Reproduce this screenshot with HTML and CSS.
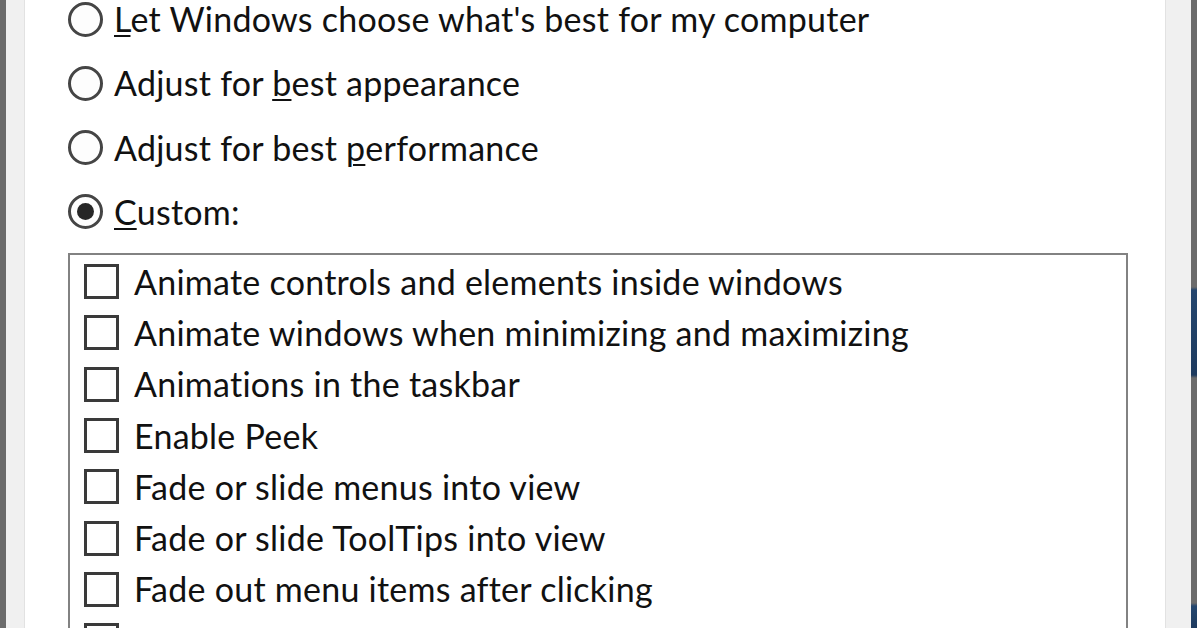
FILE: index.html
```html
<!DOCTYPE html>
<html lang="en">
<head>
<meta charset="utf-8">
<title>Performance Options</title>
<link rel="stylesheet" href="styles.css">
</head>
<body>
<div class="frame">
  <div class="edge edge-left"></div>
  <div class="side side-left"></div>
  <main class="content">
    <div class="radios">
      <label class="radio-row"><span class="radio"></span><span class="label"><u>L</u>et Windows choose what's best for my computer</span></label>
      <label class="radio-row"><span class="radio"></span><span class="label">Adjust for <u>b</u>est appearance</span></label>
      <label class="radio-row"><span class="radio"></span><span class="label">Adjust for best <u>p</u>erformance</span></label>
      <label class="radio-row"><span class="radio radio-on"></span><span class="label"><u>C</u>ustom:</span></label>
    </div>
    <div class="listbox">
      <div class="check-row"><span class="box"></span><span class="label">Animate controls and elements inside windows</span></div>
      <div class="check-row"><span class="box"></span><span class="label">Animate windows when minimizing and maximizing</span></div>
      <div class="check-row"><span class="box"></span><span class="label">Animations in the taskbar</span></div>
      <div class="check-row"><span class="box"></span><span class="label">Enable Peek</span></div>
      <div class="check-row"><span class="box"></span><span class="label">Fade or slide menus into view</span></div>
      <div class="check-row"><span class="box"></span><span class="label">Fade or slide ToolTips into view</span></div>
      <div class="check-row"><span class="box"></span><span class="label">Fade out menu items after clicking</span></div>
      <div class="check-row"><span class="box"></span><span class="label">Save taskbar thumbnail previews</span></div>
      <div class="check-row"><span class="box"></span><span class="label">Show shadows under mouse pointer</span></div>
    </div>
  </main>
  <div class="side side-right"></div>
  <div class="edge edge-right"></div>
</div>
</body>
</html>
```
FILE: styles.css
```css
html, body {
  margin: 0;
  padding: 0;
  background: #ffffff;
}
body {
  width: 1197px;
  height: 628px;
  overflow: hidden;
  font-family: Lato, "Open Sans", "Liberation Sans", sans-serif;
  font-size: 34px;
  letter-spacing: 0.25px;
  color: #111111;
}
.frame {
  display: flex;
  height: 628px;
}
.edge {
  width: 6px;
  flex: none;
  background: #6b6b6b;
}
.edge-right {
  background: linear-gradient(to bottom,
    #6b6b6b 0, #6b6b6b 287px,
    #24466e 290px, #1d3a5e 375px,
    #6b6b6b 378px, #6b6b6b 603px,
    #24466e 606px, #1d3a5e 628px);
}
.side {
  flex: none;
  background: #f0f0f0;
}
.side-left {
  width: 18px;
  border-right: 1px solid #e2e2e2;
}
.side-right {
  width: 25px;
  border-left: 1px solid #e2e2e2;
}
.content {
  flex: 1;
  min-width: 0;
  background: #ffffff;
  display: flex;
  flex-direction: column;
  overflow: hidden;
}
.radios {
  padding-left: 43px;
  display: flex;
  flex-direction: column;
  gap: 26.25px;
}
.radio-row {
  height: 38px;
  display: flex;
  align-items: center;
  gap: 11px;
}
.radio {
  width: 35px;
  height: 35px;
  box-sizing: border-box;
  border: 3px solid #454545;
  border-radius: 50%;
  flex: none;
  display: flex;
  align-items: center;
  justify-content: center;
  background: #fdfdfd;
}
.radio-on::after {
  content: "";
  width: 17px;
  height: 17px;
  border-radius: 50%;
  background: #262626;
}
.label {
  white-space: nowrap;
  line-height: 1;
}
.label u {
  text-decoration-thickness: 2px;
  text-underline-offset: 3px;
}
.listbox {
  margin: 22.25px 37px 0 43px;
  border: 2px solid #828282;
  border-bottom: none;
  padding: 1px 0 0 14px;
  flex: 1;
  background: #ffffff;
}
.check-row {
  height: 51.3px;
  display: flex;
  align-items: center;
  gap: 15px;
}
.box {
  width: 35px;
  height: 35px;
  box-sizing: border-box;
  border: 3px solid #3a3a3a;
  flex: none;
  background: #ffffff;
}
```
